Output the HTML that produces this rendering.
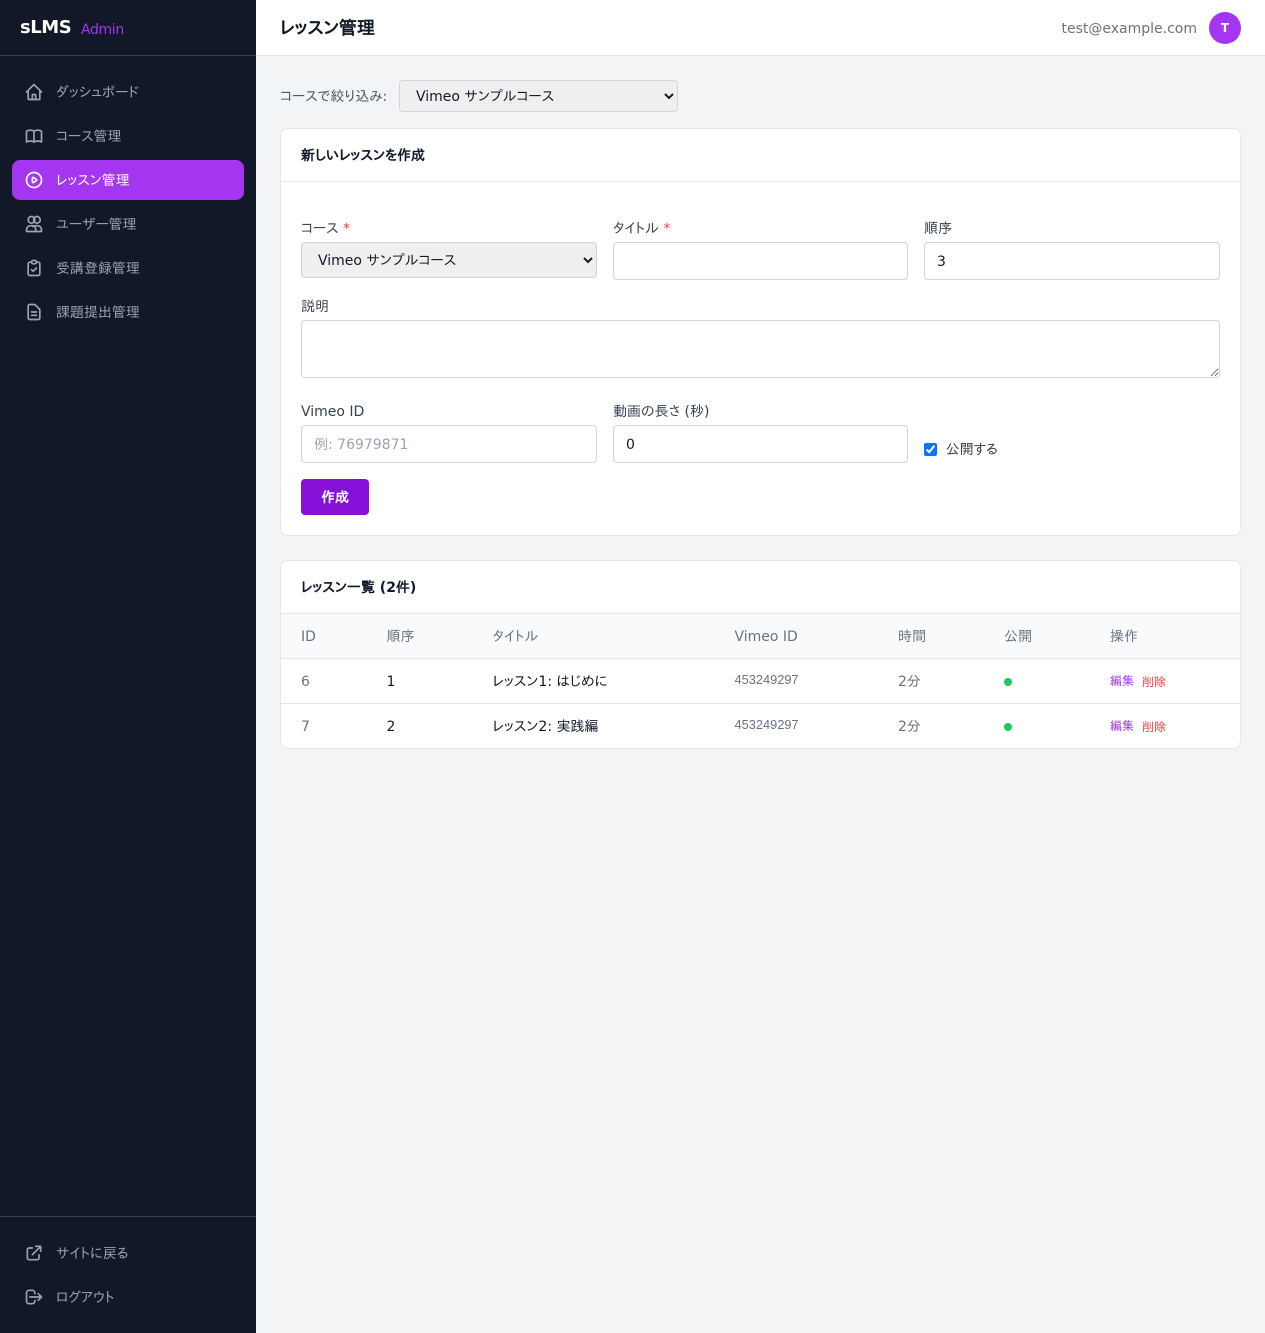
<!DOCTYPE html>
<html lang="ja">
<head>
<meta charset="utf-8">
<title>レッスン管理</title>
<style>
*{box-sizing:border-box;margin:0;padding:0}
html,body{width:1265px;height:1333px;overflow:hidden}
body{background:#f3f4f6;font-family:"DejaVu Sans","IPAPGothic","Noto Sans CJK JP",sans-serif;position:relative;color:#111827;font-size:14px}
.abs{position:absolute;white-space:nowrap}
#side{position:absolute;left:0;top:0;width:256px;height:1333px;background:#111827}
.nav{position:absolute;left:12px;width:232px;height:40px;border-radius:8px;color:#9ca3af;font-size:14px;line-height:42px;padding-left:44px}
.nav svg{position:absolute;left:12px;top:10px;width:20px;height:20px;fill:none;stroke:currentColor;stroke-width:2;stroke-linecap:round;stroke-linejoin:round}
.nav.on{background:#a435f0;color:#fff}
#top{position:absolute;left:256px;top:0;width:1009px;height:56px;background:#fff;border-bottom:1px solid #e5e7eb}
.card{position:absolute;left:280px;width:961px;background:#fff;border:1px solid #e5e7eb;border-radius:8px;overflow:hidden}
.lab{position:absolute;white-space:nowrap;font-size:14px;line-height:20px;color:#374151}
.req{color:#ef4444}
input,select,textarea{font-family:"DejaVu Sans","IPAPGothic","Noto Sans CJK JP",sans-serif;font-size:14px;color:#111827;position:absolute;border:1px solid #d1d5db;border-radius:4px;outline:none}
input[type=text],input[type=number]{background:#fff;padding:2px 12px 0}
input::placeholder{color:#9ca3af;opacity:1}
select{background-color:#efefef;padding:2px 12px 0}
.th,.td{position:absolute;white-space:nowrap}
.th{color:#6b7280;font-size:14px;line-height:20px}
.td{font-size:14px;line-height:20px;color:#111827}
.g{color:#6b7280}
.mono{font-family:"Liberation Sans",sans-serif;font-size:12.800px}
.hl{position:absolute;left:0;width:100%;height:1px;background:#e5e7eb}
.dot{position:absolute;width:8px;height:8px;border-radius:50%;background:#22c55e}
</style>
</head>
<body>
<div id="side">
  <div class="abs" style="left:20px;top:16px;font-size:18px;line-height:24px;font-weight:700;color:#fff;letter-spacing:-.45px">sLMS</div>
  <div class="abs" style="left:81px;top:20px;font-size:14px;line-height:20px;color:#a435f0;letter-spacing:-.35px">Admin</div>
  <div style="position:absolute;left:0;top:55px;width:256px;height:1px;background:#374151"></div>

  <div class="nav" style="top:72px"><svg viewBox="0 0 24 24"><path d="M3 12l2-2m0 0l7-7 7 7M5 10v10a1 1 0 001 1h3m10-11l2 2m-2-2v10a1 1 0 01-1 1h-3m-6 0a1 1 0 001-1v-4a1 1 0 011-1h2a1 1 0 011 1v4a1 1 0 001 1m-6 0h6"/></svg>ダッシュボード</div>
  <div class="nav" style="top:116px"><svg viewBox="0 0 24 24"><path d="M12 6.253v13m0-13C10.832 5.477 9.246 5 7.500 5S4.168 5.477 3 6.253v13C4.168 18.477 5.754 18 7.500 18s3.332.477 4.500 1.253m0-13C13.168 5.477 14.754 5 16.500 5c1.747 0 3.332.477 4.500 1.253v13C19.832 18.477 18.247 18 16.500 18c-1.746 0-3.332.477-4.500 1.253"/></svg>コース管理</div>
  <div class="nav on" style="top:160px"><svg viewBox="0 0 24 24"><path d="M14.752 11.168l-3.197-2.132A1 1 0 0010 9.870v4.263a1 1 0 001.555.832l3.197-2.132a1 1 0 000-1.664z"/><path d="M21 12a9 9 0 11-18 0 9 9 0 0118 0z"/></svg>レッスン管理</div>
  <div class="nav" style="top:204px"><svg viewBox="0 0 24 24"><circle cx="9" cy="7" r="4"/><circle cx="15.500" cy="7" r="4"/><path d="M3 21v-2a5 5 0 015-5h2a4 4 0 014 4v3z"/><path d="M14 21h7v-2a5 5 0 00-5-5h-2.500a5 5 0 00-3 1"/></svg>ユーザー管理</div>
  <div class="nav" style="top:248px"><svg viewBox="0 0 24 24"><path d="M9 5H7a2 2 0 00-2 2v12a2 2 0 002 2h10a2 2 0 002-2V7a2 2 0 00-2-2h-2M9 5a2 2 0 002 2h2a2 2 0 002-2M9 5a2 2 0 012-2h2a2 2 0 012 2m-6 9l2 2 4-4"/></svg>受講登録管理</div>
  <div class="nav" style="top:292px"><svg viewBox="0 0 24 24"><path d="M9 12h6m-6 4h6m2 5H7a2 2 0 01-2-2V5a2 2 0 012-2h5.586a1 1 0 01.707.293l5.414 5.414a1 1 0 01.293.707V19a2 2 0 01-2 2z"/></svg>課題提出管理</div>

  <div style="position:absolute;left:0;top:1216px;width:256px;height:1px;background:#374151"></div>
  <div class="nav" style="top:1233px"><svg viewBox="0 0 24 24"><path d="M10 6H6a2 2 0 00-2 2v10a2 2 0 002 2h10a2 2 0 002-2v-4M14 4h6m0 0v6m0-6L10 14"/></svg>サイトに戻る</div>
  <div class="nav" style="top:1277px"><svg viewBox="0 0 24 24"><path d="M17 16l4-4m0 0l-4-4m4 4H7m6 4v1a3 3 0 01-3 3H6a3 3 0 01-3-3V7a3 3 0 013-3h4a3 3 0 013 3v1"/></svg>ログアウト</div>
</div>

<div id="top">
  <div class="abs" style="left:24px;top:16px;font-size:18px;line-height:26px;font-weight:700;color:#111827">レッスン管理</div>
  <div class="abs" style="right:68px;top:19px;font-size:14px;line-height:20px;color:#6b7280">test@example.com</div>
  <div class="abs" style="left:953px;top:12px;width:32px;height:32px;border-radius:50%;background:#a435f0;color:#fff;font-size:12px;font-weight:700;line-height:32px;text-align:center">T</div>
</div>

<div class="abs" style="left:280px;top:87px;font-size:14px;line-height:20px;color:#4b5563">コースで絞り込み:</div>
<select style="left:399px;top:80px;width:279px;height:32px"><option>Vimeo サンプルコース</option></select>

<div class="card" style="top:128px;height:408px">
  <div class="abs" style="left:20px;top:17px;font-size:14px;line-height:20px;font-weight:700;color:#111827">新しいレッスンを作成</div>
  <div class="hl" style="top:52px"></div>

  <div class="lab" style="left:20px;top:90px">コース <span class="req">*</span></div>
  <select style="left:20px;top:113px;width:296px;height:36px"><option>Vimeo サンプルコース</option></select>
  <div class="lab" style="left:332px;top:90px">タイトル <span class="req">*</span></div>
  <input type="text" style="left:332px;top:113px;width:295px;height:38px">
  <div class="lab" style="left:643px;top:90px">順序</div>
  <input type="number" value="3" style="left:643px;top:113px;width:296px;height:38px">

  <div class="lab" style="left:20px;top:168px">説明</div>
  <textarea style="left:20px;top:191px;width:919px;height:58px"></textarea>

  <div class="lab" style="left:20px;top:273px">Vimeo ID</div>
  <input type="text" placeholder="例: 76979871" style="left:20px;top:296px;width:296px;height:38px">
  <div class="lab" style="left:332px;top:273px">動画の長さ (秒)</div>
  <input type="number" value="0" style="left:332px;top:296px;width:295px;height:38px">
  <input type="checkbox" checked style="position:absolute;left:643px;top:314px;width:13px;height:13px;margin:0">
  <div class="lab" style="left:664.500px;top:311px">公開する</div>

  <div class="abs" style="left:20px;top:350px;width:68px;height:36px;background:#8710d8;border-radius:4px;color:#fff;font-size:14px;font-weight:700;line-height:38px;text-align:center">作成</div>
</div>

<div class="card" style="top:560px;height:189px">
  <div class="abs" style="left:20px;top:17px;font-size:14px;line-height:20px;font-weight:700;color:#111827">レッスン一覧 (2件)</div>
  <div class="hl" style="top:52px"></div>
  <div style="position:absolute;left:0;top:53px;width:100%;height:44px;background:#f9fafb"></div>
  <div class="hl" style="top:97px"></div>
  <div class="hl" style="top:142px"></div>

  <div class="th" style="left:20px;top:66px">ID</div>
  <div class="th" style="left:105.500px;top:66px">順序</div>
  <div class="th" style="left:211.500px;top:66px">タイトル</div>
  <div class="th" style="left:453.500px;top:66px">Vimeo ID</div>
  <div class="th" style="left:617px;top:66px">時間</div>
  <div class="th" style="left:723px;top:66px">公開</div>
  <div class="th" style="left:829px;top:66px">操作</div>

  <div class="td g" style="left:20px;top:111px">6</div>
  <div class="td" style="left:105.500px;top:111px">1</div>
  <div class="td" style="left:211.500px;top:111px">レッスン1: はじめに</div>
  <div class="td g mono" style="left:453.500px;top:109px">453249297</div>
  <div class="td g" style="left:617px;top:111px">2分</div>
  <div class="dot" style="left:723px;top:117px"></div>
  <div class="td" style="left:829px;top:110px;font-size:12px;color:#a435f0">編集</div>
  <div class="td" style="left:861px;top:111px;font-size:12px;color:#ef4444">削除</div>

  <div class="td g" style="left:20px;top:156px">7</div>
  <div class="td" style="left:105.500px;top:156px">2</div>
  <div class="td" style="left:211.500px;top:156px">レッスン2: 実践編</div>
  <div class="td g mono" style="left:453.500px;top:154px">453249297</div>
  <div class="td g" style="left:617px;top:156px">2分</div>
  <div class="dot" style="left:723px;top:162px"></div>
  <div class="td" style="left:829px;top:155px;font-size:12px;color:#a435f0">編集</div>
  <div class="td" style="left:861px;top:156px;font-size:12px;color:#ef4444">削除</div>
</div>
</body>
</html>
